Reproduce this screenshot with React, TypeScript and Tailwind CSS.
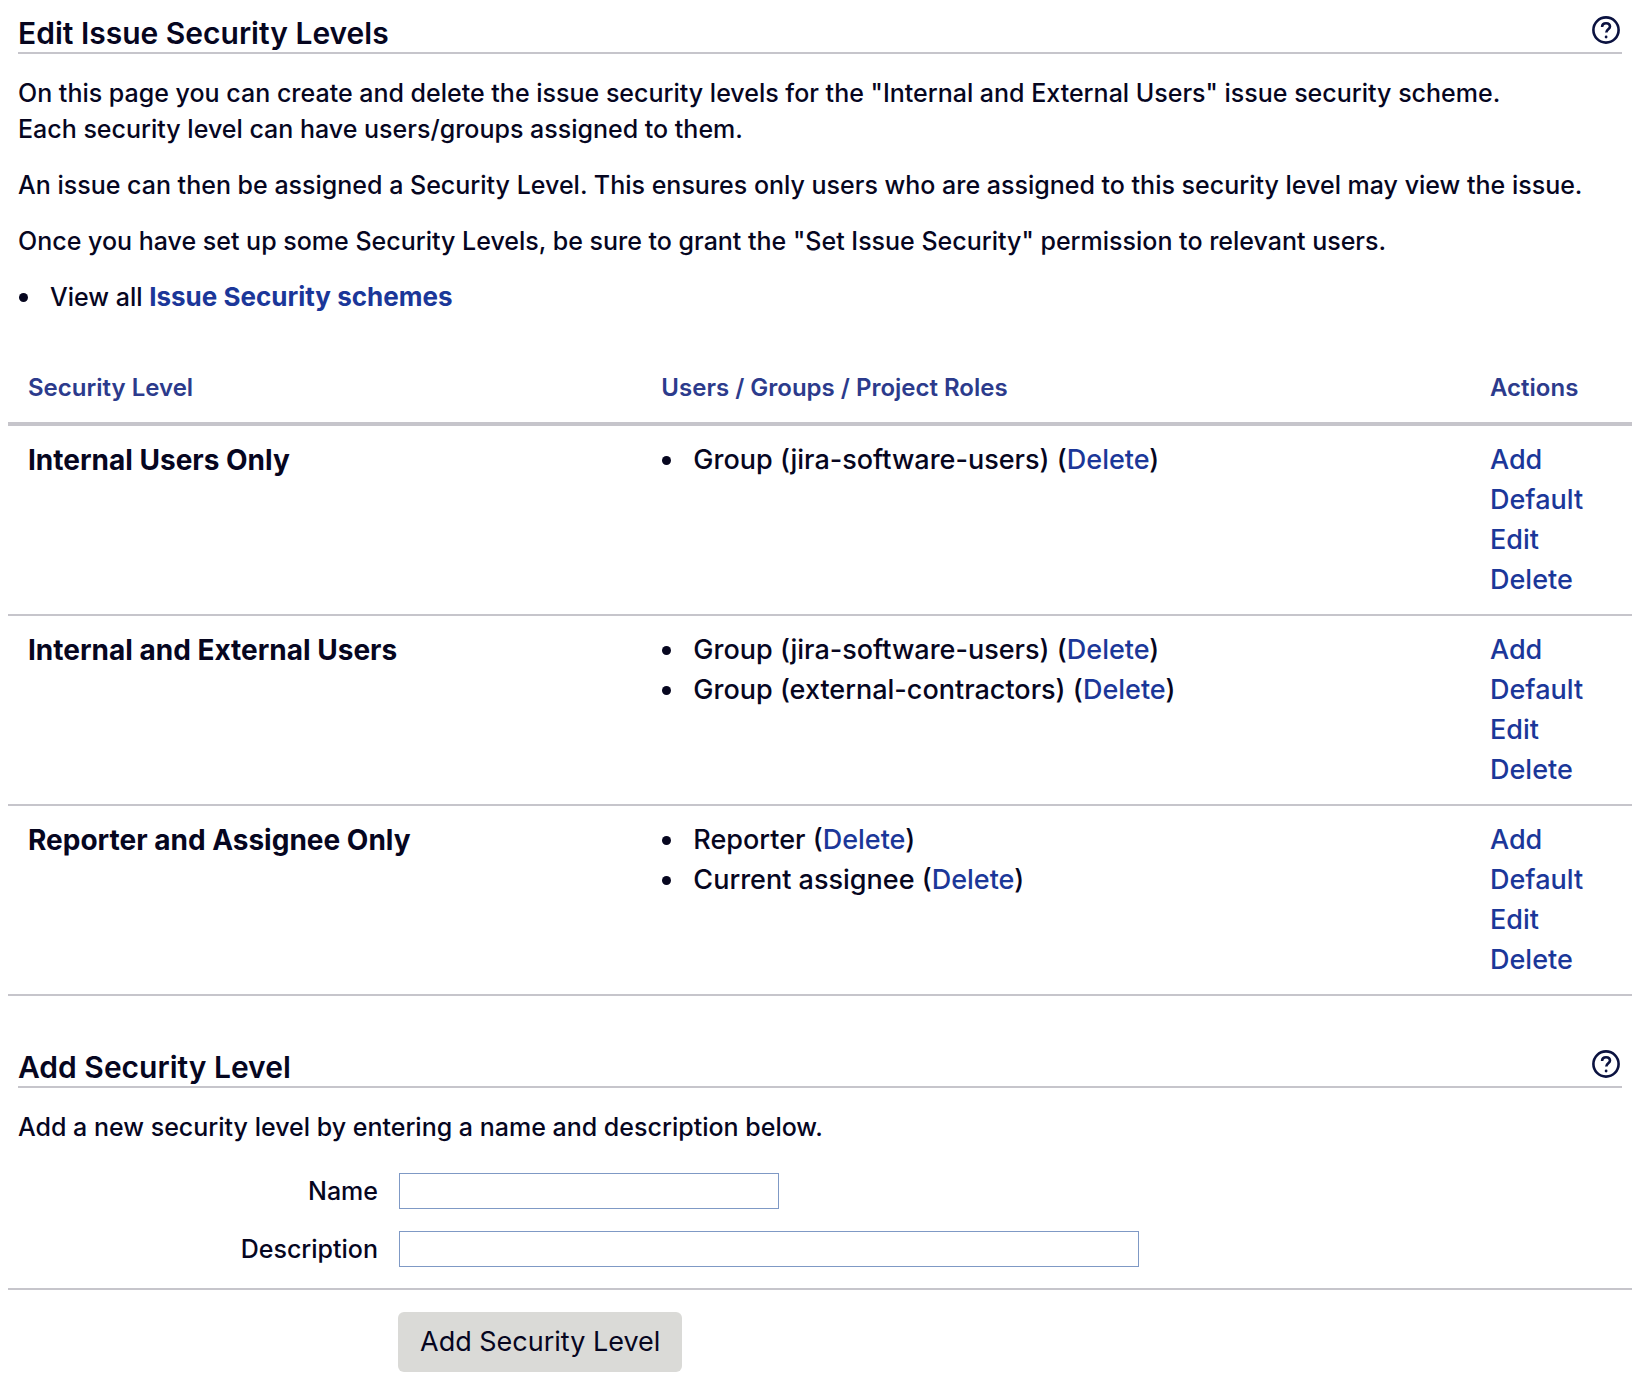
import React from "react";

const levels = [
  { name: "Internal Users Only", members: ["Group (jira-software-users)"] },
  {
    name: "Internal and External Users",
    members: ["Group (jira-software-users)", "Group (external-contractors)"],
  },
  { name: "Reporter and Assignee Only", members: ["Reporter", "Current assignee"] },
];
const actions = ["Add", "Default", "Edit", "Delete"];

function HelpLink({ label }: { label: string }) {
  return (
    <a href="#help" aria-label={label} className="mr-0.5 mb-2 block">
      <svg width="28" height="28" viewBox="0 0 28 28" fill="none" stroke="#0b1240">
        <circle cx="14" cy="14" r="12.6" strokeWidth="2.6" />
        <path
          d="M10.1 11C10.1 8.6 11.8 7.2 14.1 7.2s3.9 1.4 3.9 3.4c0 2.7-3.7 2.8-3.7 6"
          strokeWidth="2.6"
        />
        <circle cx="14.1" cy="21" r="1.4" fill="#0b1240" stroke="none" />
      </svg>
    </a>
  );
}

function SectionHeader({ title }: { title: string }) {
  return (
    <header className="mx-2.5 flex items-end justify-between border-b-2 border-[#c6c5cb]">
      <h2 className="text-[30px] leading-[38px] font-semibold">{title}</h2>
      <HelpLink label={`Help: ${title}`} />
    </header>
  );
}

function Bullet({ children }: { children: React.ReactNode }) {
  return (
    <li className="flex items-center">
      <span className="mr-[22px] ml-px size-[9px] shrink-0 rounded-full bg-[#06061f]" />
      <span>{children}</span>
    </li>
  );
}

export default function App() {
  return (
    <main className="bg-white py-3.5 pr-4 pl-2 font-['Inter','Liberation_Sans',sans-serif] text-[25px] font-medium text-[#06061f]">
      <SectionHeader title="Edit Issue Security Levels" />
      <div className="mx-2.5 mt-[21px] space-y-5 leading-9">
        <p>
          On this page you can create and delete the issue security levels for the "Internal and External Users" issue
          security scheme.
          <br />
          Each security level can have users/groups assigned to them.
        </p>
        <p>
          An issue can then be assigned a Security Level. This ensures only users who are assigned to this security
          level may view the issue.
        </p>
        <p>Once you have set up some Security Levels, be sure to grant the "Set Issue Security" permission to relevant users.</p>
        <ul>
          <Bullet>
            View all{" "}
            <a href="#schemes" className="text-[26px] font-bold text-[#1b3799]">
              Issue Security schemes
            </a>
          </Bullet>
        </ul>
      </div>

      <table className="mt-[49px] w-full table-fixed border-collapse text-left text-[27px] leading-10">
        <colgroup>
          <col className="w-[39%]" />
          <col />
          <col className="w-[162px]" />
        </colgroup>
        <thead>
          <tr className="border-b-4 border-[#c6c5cb] text-2xl leading-10 text-[#2c3b8c]">
            <th className="px-5 pt-1 pb-3.5 font-semibold">Security Level</th>
            <th className="px-5 pt-1 pb-3.5 font-semibold">Users / Groups / Project Roles</th>
            <th className="px-5 pt-1 pb-3.5 font-semibold">Actions</th>
          </tr>
        </thead>
        <tbody>
          {levels.map((level) => (
            <tr key={level.name} className="border-b-2 border-[#c6c5cb] align-top">
              <td className="px-5 py-3.5 text-[28px] leading-10 font-bold">{level.name}</td>
              <td className="px-5 py-3.5">
                <ul>
                  {level.members.map((member) => (
                    <Bullet key={member}>
                      {member} (<a href="#delete" className="text-[#1b3799]">Delete</a>)
                    </Bullet>
                  ))}
                </ul>
              </td>
              <td className="px-5 py-3.5">
                {actions.map((action) => (
                  <a key={action} href="#action" className="block text-[#1b3799]">
                    {action}
                  </a>
                ))}
              </td>
            </tr>
          ))}
        </tbody>
      </table>

      <form className="mt-[52px]">
        <SectionHeader title="Add Security Level" />
        <p className="mx-2.5 mt-[21px] leading-9">Add a new security level by entering a name and description below.</p>
        <div className="mt-7 grid grid-cols-[370px_1fr] items-center gap-x-[21px] gap-y-[22px] border-b-2 border-[#c6c5cb] pb-[21px]">
          <label htmlFor="name" className="text-right leading-9">Name</label>
          <input id="name" type="text" className="h-9 w-[380px] border border-[#7f99c5] px-2 text-xl" />
          <label htmlFor="description" className="text-right leading-9">Description</label>
          <input id="description" type="text" className="h-9 w-[740px] border border-[#7f99c5] px-2 text-xl" />
        </div>
        <button type="submit" className="mt-[22px] ml-[390px] h-[60px] rounded-md bg-[#dadad7] px-[22px] text-[27px] font-normal">
          Add Security Level
        </button>
      </form>
    </main>
  );
}
